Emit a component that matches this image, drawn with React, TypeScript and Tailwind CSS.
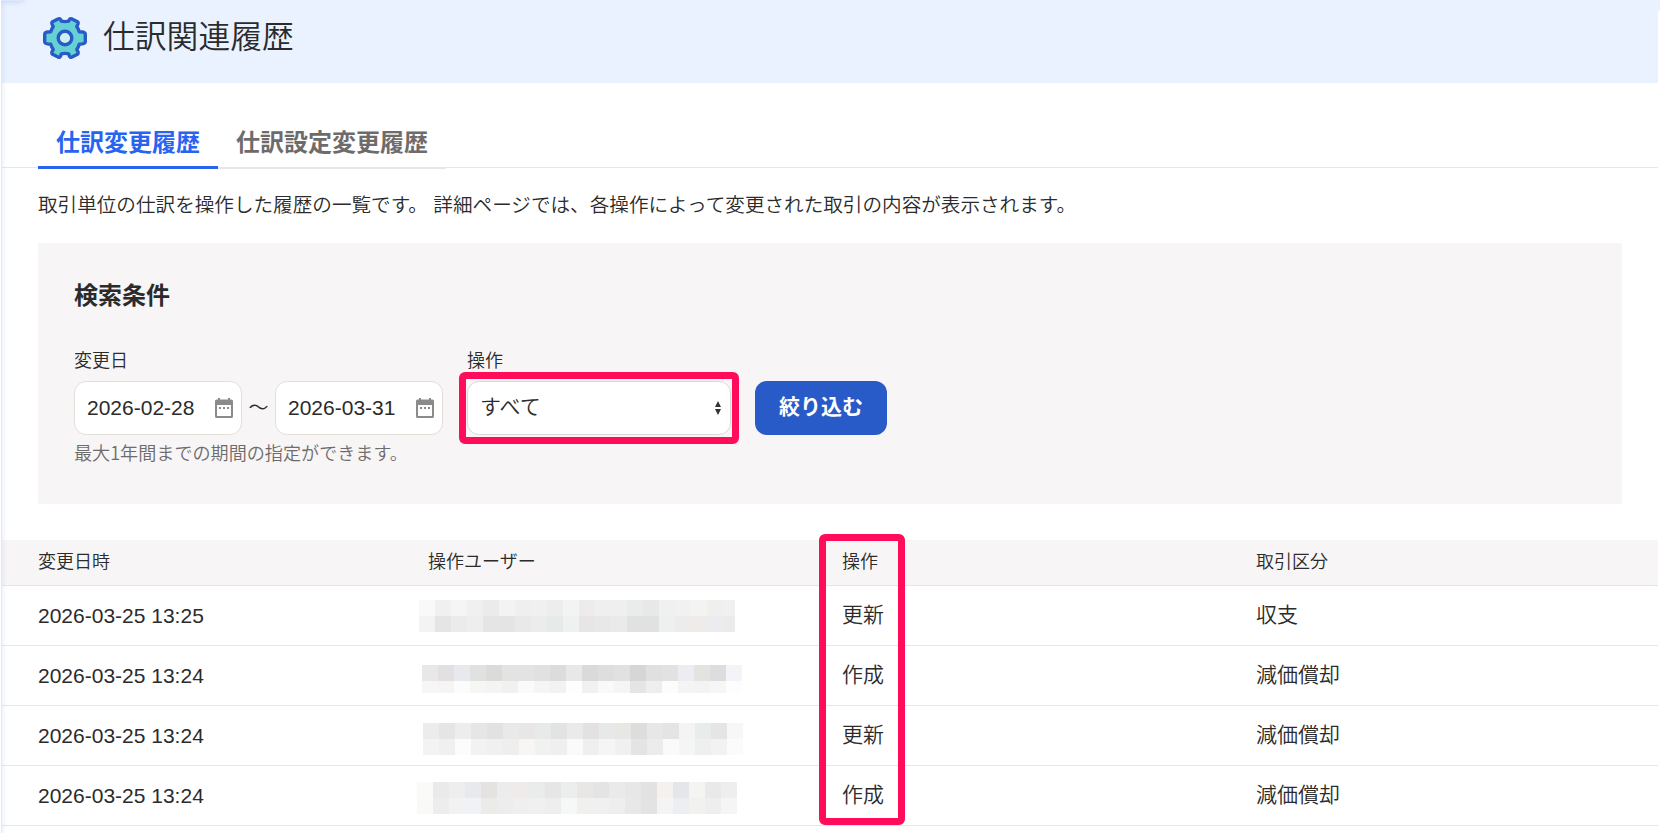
import React, { useState } from 'react';

interface HistoryRow {
  changedAt: string;
  action: string;
  category: string;
  mask: { offset: string; top: string[]; bottom: string[]; bottomHeight: string; lastWidth: string };
}

const split = (s: string) => s.split(' ').map((c) => `#${c}`);

const rows: HistoryRow[] = [
  {
    changedAt: '2026-03-25 13:25',
    action: '更新',
    category: '収支',
    mask: {
      offset: '-ml-[9px] mt-[14px]',
      top: split('f9f9f9 f0f0f0 f5f5f5 f0f0ee ebebeb f3f3f3 efefed f0f0f0 ededed f2f4f4 eeebec f0eff0 edf0ef eaebeb e8e8e8 f0f0f0 f1f1f1 f3f3f1 efefee f0f0f0'),
      bottom: split('f4f3f1 e5e5e5 ebebeb f0edee e3e6e5 e4e4e4 e9e9e9 eeebec e6eae8 eef0f2 e8e6e4 e8e8e8 eaeaea e1e1df dfe2e1 edf0ef ececec eeebe9 ebecef ebebeb'),
      bottomHeight: 'h-4',
      lastWidth: 'w-3',
    },
  },
  {
    changedAt: '2026-03-25 13:24',
    action: '作成',
    category: '減価償却',
    mask: {
      offset: '-ml-[6px] mt-[19px]',
      top: split('e9e8e6 e2e0e1 e7e9ee e0e1e1 dbdbd9 e4e3e1 e3e3e3 e1e1e1 dcdcda e8e8e8 dadada dedede e2e1df d6d6d6 dee0e2 e2e2e2 ecedf0 e3e3e0 dddddd f3f4f7'),
      bottom: split('f6f6f6 f5f5f5 fbfdfc f6f6f3 f4f4f4 f1f1f1 fafafa f5f5f5 f2f2f2 fefefd f1f1f1 f9f9f9 f5f5f5 e5e5e5 eeeeee fcfcfc f4f4f4 f3f3f3 f6f6f6 fdfdfd'),
      bottomHeight: 'h-3',
      lastWidth: 'w-4',
    },
  },
  {
    changedAt: '2026-03-25 13:24',
    action: '更新',
    category: '減価償却',
    mask: {
      offset: '-ml-[5px] mt-[17px]',
      top: split('ececec e5e5e5 ededed e6e6e6 e2e2e0 e9e9e9 e9e7e5 e8e9e9 e1e4e3 eaeae8 e3e1e2 e6e9e8 e7e7e4 dddddb e7e7e7 e4e4e4 f4f4f4 e9ecec e5e5e5 f5f8f7'),
      bottom: split('f3f3f3 f0f0f0 fcfcfa f2f2f2 f0f0f0 eeeeee f8f6f4 f1f1f1 efefef fafafa efefef f5f5f5 f0f0f0 e4e4e4 ececec fafafa f3f6f5 efefef f2f2f2 fbfbfb'),
      bottomHeight: 'h-4',
      lastWidth: 'w-4',
    },
  },
  {
    changedAt: '2026-03-25 13:24',
    action: '作成',
    category: '減価償却',
    mask: {
      offset: '-ml-[11px] mt-[16px]',
      top: split('fafaf8 eaeaea eeeeee e7e9ec e4e3e1 ececec eeebea eaeceb e6e6e6 ebeeed e9e7e5 e4e4e4 eaeaea e7e7e7 e2e2e2 f4f1ef e5e6ea f4f4f1 e9e9e9 eeeeee'),
      bottom: split('f9f9f7 ededed f2f2f2 f0f2f5 ebebe8 ededed efefef f0f0f0 eeeeee f5f8f7 f0f0ee f0f0f0 eeeeee e8e8e8 e3e3e3 f4f4f4 edeef2 f1f1ef eeeeee f5f5f5'),
      bottomHeight: 'h-4',
      lastWidth: 'w-4',
    },
  },
];

const GearIcon = () => (
  <svg className="h-12 w-12 shrink-0" viewBox="-24 -24 48 48" fill="none">
    <path
      d="M-6.5 -19.2 C-5 -19.8 -4.2 -18.3 -3.7 -16.8 Q0 -15.9 3.7 -16.8 C4.2 -18.3 5 -19.8 6.5 -19.2 L12.5 -16.3 C14 -15.3 13 -13.4 11.8 -11.5 Q13.4 -9 14.3 -6.2 C16 -6.2 20.3 -6.2 20.3 -3.8 L20.3 3.8 C20.3 6.2 16 6.2 14.3 6.2 Q13.4 9 11.8 11.5 C13 13.4 14 15.3 12.5 16.3 L6.5 19.2 C5 19.8 4.2 18 3.7 15.8 Q0 14.9 -3.7 15.8 C-4.2 18 -5 19.8 -6.5 19.2 L-12.5 16.3 C-14 15.3 -13 13.4 -11.8 11.5 Q-13.4 9 -14.3 6.2 C-16 6.2 -20.3 6.2 -20.3 3.8 L-20.3 -3.8 C-20.3 -6.2 -16 -6.2 -14.3 -6.2 Q-13.4 -9 -11.8 -11.5 C-13 -13.4 -14 -15.3 -12.5 -16.3 Z"
      fill="#66d1d3"
      stroke="#285ac8"
      strokeWidth="3.4"
      strokeLinejoin="round"
    />
    <circle r="6.8" fill="#ccf1f0" stroke="#285ac8" strokeWidth="3.4" />
  </svg>
);

const CalendarIcon = () => (
  <svg className="h-5 w-[18px]" viewBox="0 0 18 20">
    <path
      fillRule="evenodd"
      fill="#8b8b8b"
      d="M3 0h2v1.500h8V0h2v1.500h1.500A1.500 1.500 0 0 1 18 3v15.500a1.500 1.500 0 0 1-1.500 1.500h-15A1.500 1.500 0 0 1 0 18.500V3A1.500 1.500 0 0 1 1.500 1.500H3zM2 7v11h14V7z"
    />
    <path fill="#8b8b8b" d="M4 9h2v2H4zM8 9h2v2H8zM12 9h2v2h-2z" />
  </svg>
);

const DateInput: React.FC<{ value: string }> = ({ value }) => (
  <div className="flex h-[54px] w-[168px] items-center justify-between rounded-xl border border-[#e3dfd8] bg-white pr-2 pl-3">
    <span className="text-[21px]">{value}</span>
    <CalendarIcon />
  </div>
);

const MaskedUser: React.FC<{ mask: HistoryRow['mask'] }> = ({ mask }) => (
  <div className={mask.offset}>
    {[mask.top, mask.bottom].map((line, i) => (
      <div key={i} className="flex">
        {line.map((color, j) => (
          <span
            key={j}
            className={`${i === 0 ? 'h-4' : mask.bottomHeight} ${j === line.length - 1 ? mask.lastWidth : 'w-4'}`}
            style={{ backgroundColor: color }}
          />
        ))}
      </div>
    ))}
  </div>
);

export default function App() {
  const [tab, setTab] = useState(0);
  const tabs = ['仕訳変更履歴', '仕訳設定変更履歴'];

  return (
    <div className="relative h-[833px] w-[1660px] overflow-hidden border-l border-white bg-white font-['Liberation_Sans','Noto_Sans_CJK_JP',sans-serif] text-[#2b2b2b]">
      <div className="mr-0.5 h-full border-l border-[#dfe7fa]">
        <header className="flex h-[83px] items-start bg-[#eaf2ff] pt-[14px] pl-[39px] shadow-[2px_-72px_0_#eaf2ff]">
          <GearIcon />
          <h1 className="ml-[14px] text-[31.8px] leading-[46px] font-[350]">仕訳関連履歴</h1>
        </header>

        <nav className="flex h-[86px] items-end pl-9 shadow-[inset_0_-1px_0_#fff,inset_0_-2px_0_#e6e6e6]">
          {tabs.map((name, i) => (
            <button
              key={name}
              onClick={() => setTab(i)}
              className={`h-[55px] px-[18px] text-2xl font-bold ${
                tab === i
                  ? 'border-b-3 border-[#2864f0] pt-[5px] text-[#2864f0]'
                  : 'border-b-2 border-[#e6e6e6] pt-1 text-[#6e6b6b]'
              }`}
            >
              {name}
            </button>
          ))}
        </nav>

        <p className="mt-[21px] ml-9 text-[19.6px] leading-[30px] font-[350]">
          取引単位の仕訳を操作した履歴の一覧です。 詳細ページでは、各操作によって変更された取引の内容が表示されます。
        </p>

        <section className="mt-[23px] mr-9 ml-9 h-[261px] bg-[#f7f5f6] px-9 pt-9">
          <h2 className="text-2xl leading-[34px] font-bold">検索条件</h2>
          <div className="mt-[34px] flex">
            <div className="w-[393px]">
              <div className="h-[34px] text-lg leading-[28px] font-[350]">変更日</div>
              <div className="flex items-center">
                <DateInput value="2026-02-28" />
                <span className="w-[33px] text-center text-[20px] font-[350]">～</span>
                <DateInput value="2026-03-31" />
              </div>
              <div className="mt-[3px] font-['Noto_Sans_CJK_JP',sans-serif] text-[18.1px] leading-[28px] font-[350] text-[#6e6b6b]">
                最大1年間までの期間の指定ができます。
              </div>
            </div>
            <div>
              <div className="h-[34px] text-lg leading-[28px] font-[350]">操作</div>
              <div className="relative flex h-[54px] w-[264px] items-center justify-between rounded-xl border border-[#d9d9d9] bg-white pr-[9px] pl-3 text-[21px] font-[350]">
                <span className="pb-0.5">すべて</span>
                <svg className="h-4 w-[6px]" viewBox="0 0 6 16" fill="#333">
                  <path d="M3 1l3 6H0zM3 15l3-6H0z" />
                </svg>
                <span className="pointer-events-none absolute -top-[10px] -left-[9px] h-[72px] w-[280px] rounded-md border-7 border-[#ff0d5b]" />
              </div>
            </div>
            <button className="mt-[34px] ml-6 h-[54px] w-[132px] rounded-xl bg-[#285ac8] pb-0.5 text-[21px] font-bold text-white">
              絞り込む
            </button>
          </div>
        </section>

        <div className="relative mt-9">
          <div className="grid h-[46px] grid-cols-[390px_414px_414px_1fr] border-b border-[#e6e6e6] bg-[#f7f5f6] pl-9 text-lg leading-[44px] font-[350]">
            <span>変更日時</span>
            <span>操作ユーザー</span>
            <span>操作</span>
            <span>取引区分</span>
          </div>
          {rows.map((row, i) => (
            <div
              key={i}
              className="grid h-[60px] grid-cols-[390px_414px_414px_1fr] border-b border-[#e6e6e6] pl-9 text-[21px] leading-[58px] font-[350]"
            >
              <span className="pt-px">{row.changedAt}</span>
              <MaskedUser mask={row.mask} />
              <span>{row.action}</span>
              <span>{row.category}</span>
            </div>
          ))}
          <span className="pointer-events-none absolute -top-[6px] left-[817px] h-[291px] w-[86px] rounded-md border-7 border-[#ff0d5b]" />
        </div>
      </div>

      {/* soft edge cast by the side menu and its handle */}
      <div className="pointer-events-none absolute top-0 left-px h-full w-[5px] bg-linear-to-r from-[#285ac8]/6 to-transparent" />
      <div className="pointer-events-none absolute -top-[5px] left-0 h-[6px] w-[23px] rounded-br-sm bg-[#dce8ff] shadow-[0_0_6px_rgba(60,80,130,0.25)]" />
    </div>
  );
}
